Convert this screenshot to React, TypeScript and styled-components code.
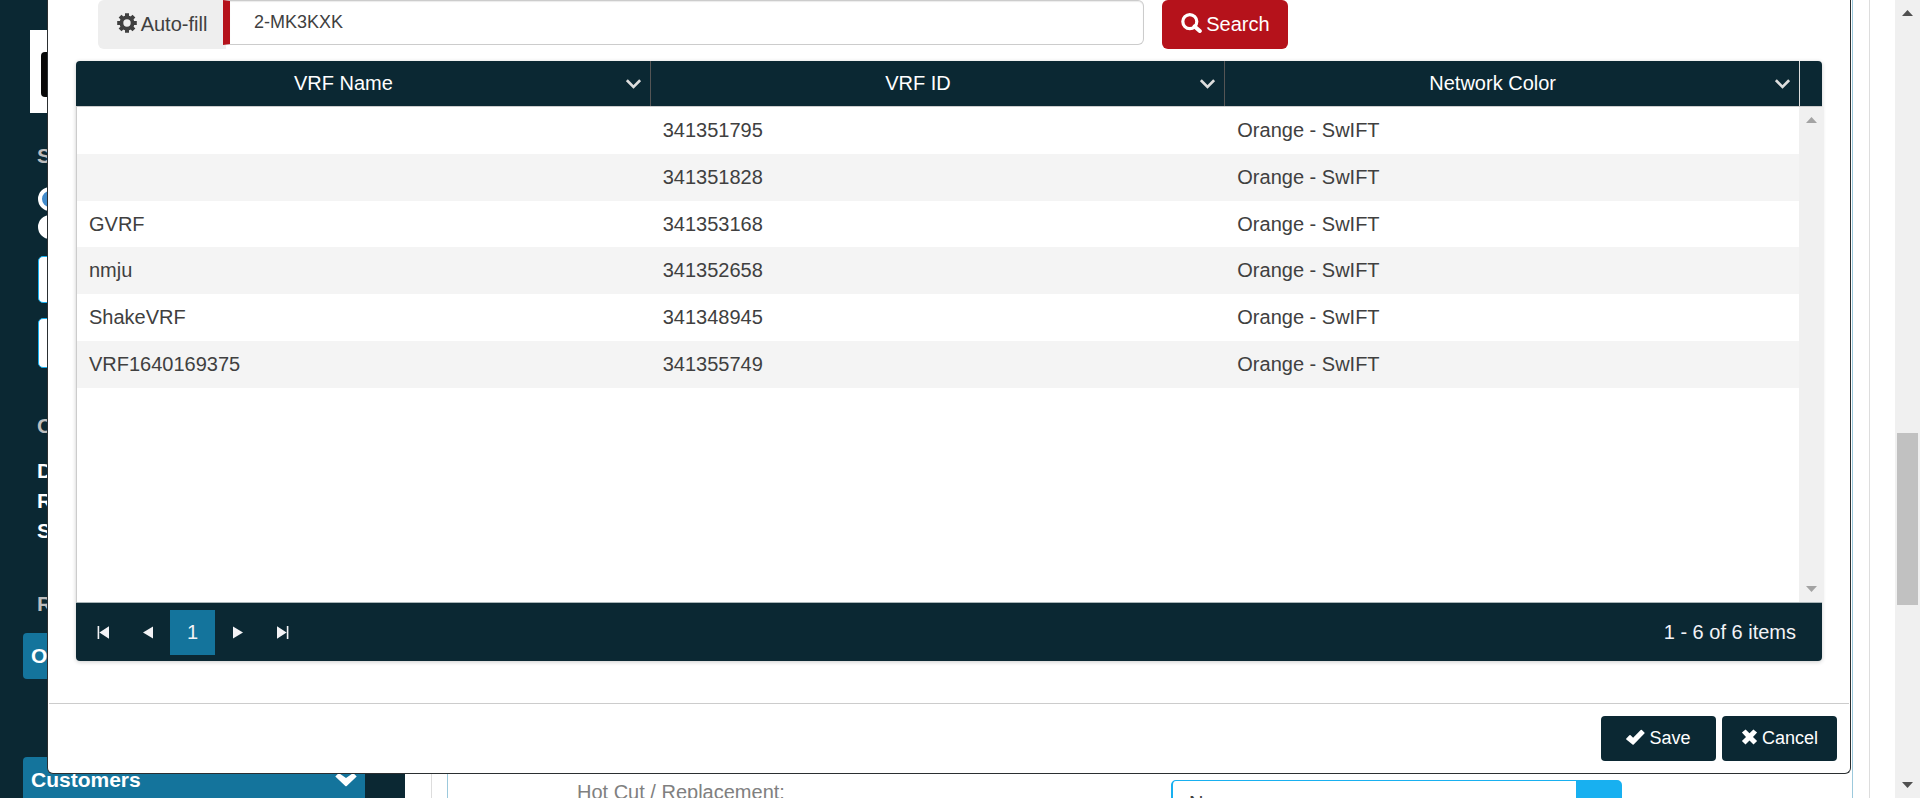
import React from "react";
import styled, { createGlobalStyle } from "styled-components";

const navy = "#0b2833";
const teal = "#14749c";
const red = "#b5121b";
const sky = "#18b0f0";

const GlobalStyle = createGlobalStyle`
  *, *::before, *::after { box-sizing: border-box; }
  body { margin: 0; background: #fff; }
  body, button, input, select { font-family: "Liberation Sans", Arial, sans-serif; }
  button { cursor: pointer; }
`;

const Page = styled.div`
  position: relative;
  display: flex;
  height: 100vh;
  overflow: hidden;
  font-size: 20px;
  color: #404040;
`;

/* Sidebar behind the dialog */
const Sidebar = styled.aside`
  display: flex;
  flex-direction: column;
  flex: 0 0 405px;
  padding: 30px 40px 0 23px;
  background: ${navy};
  color: #fff;
  font-size: 21px;
  font-weight: bold;
  line-height: 30px;
`;

const Logo = styled.div`
  flex: none;
  height: 83px;
  margin-left: 7px;
  padding: 22px 11px 16px;
  background: #fff;
`;

const LogoMark = styled.div`
  width: 45px;
  height: 45px;
  border-radius: 4px;
  background: #080808;
`;

const SideHeading = styled.h4<{ $gap: number }>`
  margin: ${(p) => p.$gap}px 14px 0;
  font-size: 21px;
  line-height: 30px;
  color: #bdbdbd;
`;

const RadioGroup = styled.div`
  display: flex;
  flex-direction: column;
  gap: 4px;
  margin: 16px 15px 0;
`;

const Radio = styled.input`
  appearance: none;
  width: 24px;
  height: 24px;
  margin: 0;
  border: 4px solid #fff;
  border-radius: 50%;
  background: #fff;
  &:checked { background: #428bca; }
`;

const SideInput = styled.input`
  flex: none;
  height: 47px;
  margin: 17px 15px 0;
  border: 1px solid ${sky};
  border-radius: 5px;
  background: #fff;
`;

const SideSelect = styled.select`
  flex: none;
  height: 50px;
  margin: 15px 15px 0;
  border: 1px solid ${sky};
  border-radius: 5px;
  background: #fff;
`;

const SideLinks = styled.nav`
  display: flex;
  flex-direction: column;
  margin: 15px 14px 0;
  a { color: #fff; text-decoration: none; }
`;

const SideButton = styled.button<{ $gap: number }>`
  display: flex;
  flex: none;
  align-items: center;
  justify-content: space-between;
  height: 46px;
  margin-top: ${(p) => p.$gap}px;
  padding: 0 8px;
  border: 0;
  border-radius: 4px;
  background: ${teal};
  color: #fff;
  font-size: 21px;
  font-weight: bold;
`;

/* Page form behind the dialog */
const Main = styled.main`
  display: flex;
  flex: 1;
  min-width: 0;
  padding: 0 25px 0 26px;
`;

const OuterPanel = styled.section`
  display: flex;
  flex: 1;
  padding: 0 16px 0 15px;
  border: solid #ddd;
  border-width: 0 1px;
`;

const InnerPanel = styled.div`
  flex: 1;
  padding: 780px 230px 0 129px;
  border: solid #9cc9dc;
  border-width: 0 1px;
`;

const FieldRow = styled.div`
  display: flex;
  justify-content: space-between;
  color: #808080;
  line-height: 24px;
`;

const FieldSelect = styled.select`
  appearance: none;
  width: 451px;
  height: 45px;
  padding: 0 16px;
  border: solid ${sky};
  border-width: 1px 46px 1px 2px;
  border-radius: 5px;
  background: #fff;
  color: #404040;
  font-size: 20px;
`;

/* Scroll bars */
const Track = styled.div<{ $padding: string }>`
  display: flex;
  flex: 1;
  flex-direction: column;
  align-items: center;
  justify-content: space-between;
  padding: ${(p) => p.$padding};
  background: #f0f0f0;
`;

const PageScroll = styled.div`
  display: flex;
  flex: 0 0 25px;
`;

const Thumb = styled.div`
  width: 21px;
  height: 172px;
  margin-top: 240px;
  background: #c1c1c1;
`;

/* Dialog */
const Dialog = styled.div`
  position: absolute;
  top: 0;
  left: 47px;
  right: 69px;
  border: 1px solid #2b2f31;
  border-top: 0;
  border-radius: 0 0 6px 6px;
  background: #fff;
`;

const DialogBody = styled.div`
  padding: 0 28px 42px;
`;

const SearchRow = styled.form`
  display: flex;
  gap: 18px;
  align-items: flex-start;
  margin-bottom: 12px;
  padding-left: 22px;
`;

const InputGroup = styled.div`
  display: flex;
  align-items: flex-start;
  width: 60.7%;
`;

const Button = styled.button<{ $tone: string; $size: "large" | "medium" }>`
  display: flex;
  align-items: center;
  justify-content: center;
  gap: 4px;
  flex: none;
  width: ${(p) => (p.$size === "large" ? 126 : 115)}px;
  height: ${(p) => (p.$size === "large" ? 49 : 45)}px;
  padding: 0;
  border: 0;
  border-radius: ${(p) => (p.$size === "large" ? 6 : 4)}px;
  background: ${(p) => p.$tone};
  color: #fff;
  font-size: ${(p) => (p.$size === "large" ? 20 : 18)}px;
  svg { margin-bottom: 3px; }
`;

const AutoFill = styled(Button)`
  width: 128px;
  border-radius: 6px 0 0 6px;
  color: #404040;
`;

const AccountInput = styled.input`
  flex: 1;
  min-width: 0;
  height: 45px;
  margin-left: -3px;
  padding: 0 24px;
  border: 1px solid #ccc;
  border-left: 7px solid ${red};
  border-radius: 0 6px 6px 0;
  box-shadow: inset 0 1px 1px #ececec;
  color: #404040;
  font-size: 18px;
`;

const Grid = styled.section`
  border-radius: 4px;
  box-shadow: 0 1px 4px rgba(0, 0, 0, 0.2);
`;

const GridMain = styled.div`
  display: flex;
`;

const GridContent = styled.div`
  flex: 1;
  min-width: 0;
  min-height: 541px;
`;

const Table = styled.table`
  width: 100%;
  height: 327px;
  table-layout: fixed;
  border-collapse: separate;
  border-spacing: 0;
`;

const HeadCell = styled.th<{ $last?: boolean }>`
  height: 46px;
  padding: 0;
  border-bottom: 1px solid #ccc;
  background: ${navy};
  color: #fff;
  font-weight: normal;
  &:first-child { border-top-left-radius: 4px; }
  > div {
    display: flex;
    align-items: center;
    height: 45px;
    border-right: 1px solid ${(p) => (p.$last ? "#ddd" : "#555")};
  }
`;

const HeadTitle = styled.span`
  flex: 1;
  text-align: center;
`;

const MenuButton = styled.button`
  display: flex;
  width: 39px;
  padding: 0 0 0 15px;
  border: 0;
  background: none;
  color: #ddd;
`;

const Row = styled.tr`
  &:nth-child(even) { background: #f4f4f4; }
`;

const Cell = styled.td`
  padding: 0 12px;
  &:first-child { border-left: 1px solid #ccc; }
`;

const BlankArea = styled.div`
  height: 214px;
  border-left: 1px solid #ccc;
`;

const GridScroll = styled.div`
  display: flex;
  flex: 0 0 22px;
  flex-direction: column;
`;

const HeadCap = styled.div`
  height: 46px;
  border-bottom: 1px solid #ccc;
  border-top-right-radius: 4px;
  background: ${navy};
`;

const GridTrack = styled(Track)`
  margin-left: -1px;
  margin-right: -2px;
`;

const Pager = styled.footer`
  display: flex;
  align-items: center;
  height: 59px;
  padding: 0 26px 0 4px;
  border-top: 1px solid #a9b5b8;
  border-radius: 0 0 4px 4px;
  background: ${navy};
  color: #f3f3f6;
`;

const PagerButton = styled.button<{ $current?: boolean }>`
  display: flex;
  align-items: center;
  justify-content: center;
  width: 45px;
  height: 45px;
  padding: 0;
  border: 0;
  background: ${(p) => (p.$current ? teal : "none")};
  color: #f3f3f6;
  font-size: 20px;
`;

const PagerInfo = styled.span`
  margin-left: auto;
`;

const DialogFooter = styled.footer`
  display: flex;
  justify-content: flex-end;
  gap: 6px;
  margin: 0 1px;
  padding: 12px;
  border-top: 1px solid #ccc;
`;

/* Icons */
const Gear = () => (
  <svg width="20" height="20" viewBox="0 0 20 20" fill="none" stroke="currentColor" aria-hidden="true">
    <circle cx="10" cy="10" r="5.6" strokeWidth="3.8" />
    {[0, 45, 90, 135].map((a) => (
      <g key={a} transform={`rotate(${a} 10 10)`} strokeWidth="4">
        <path d="M10 0.2V3.6M10 16.4V19.8" />
      </g>
    ))}
  </svg>
);

const Magnifier = () => (
  <svg width="21" height="20" viewBox="0 0 21 20" fill="none" stroke="currentColor" aria-hidden="true">
    <circle cx="8.8" cy="8.6" r="7" strokeWidth="3.2" />
    <path d="M13.6 13.4L18.8 18" strokeWidth="4" strokeLinecap="round" />
  </svg>
);

const Tick = () => (
  <svg width="19" height="18" viewBox="0 0 19 18" aria-hidden="true">
    <path fill="currentColor" d="M0.3 10.4L3.4 7.3Q4 6.8 4.6 7.3L7.1 9.7L14.7 2Q15.3 1.5 15.9 2L18.4 4.4Q18.9 5 18.4 5.6L7.7 16.4Q7.1 16.9 6.5 16.4L0.3 11.4Q-0.1 10.9 0.3 10.4Z" />
  </svg>
);

const Cross = () => (
  <svg width="17" height="18" viewBox="0 0 17 18" aria-hidden="true">
    <path fill="currentColor" d="M4.6 1.4L8.5 5.3L12.4 1.4L16.1 4.6L12 8.9L16.1 12.9L12.5 16.4L8.5 12.4L4.5 16.4L0.9 12.9L5 8.9L0.9 4.6Z" />
  </svg>
);

const HeavyChevron = () => (
  <svg width="22" height="14" viewBox="0 0 22 14" aria-hidden="true">
    <path fill="currentColor" d="M0.3 3.4L3.8 0L11 5L18.2 0L21.7 3.4L11.7 13Q11 13.6 10.3 13Z" />
  </svg>
);

const ThinChevron = () => (
  <svg width="15" height="10" viewBox="0 0 15 10" fill="none" stroke="currentColor" strokeWidth="2.6" aria-hidden="true">
    <path d="M0.9 1.2L7.5 7.8L14.1 1.2" />
  </svg>
);

const Arrow = ({ down, color }: { down?: boolean; color: string }) => (
  <svg width="11" height="6" viewBox="0 0 11 6" fill={color} aria-hidden="true">
    <path d={down ? "M0 0H11L5.5 6Z" : "M0 6H11L5.5 0Z"} />
  </svg>
);

const PageArrow = ({ back, end }: { back?: boolean; end?: boolean }) => (
  <svg width="12" height="13" viewBox="0 0 12 13" fill="currentColor" aria-hidden="true">
    <g transform={back ? "translate(12 0) scale(-1 1)" : undefined}>
      <path d={end ? "M0 0.2L9.6 6.5L0 12.8ZM9.8 0H11.4V13H9.8Z" : "M1 0.4L11 6.5L1 12.6Z"} />
    </g>
  </svg>
);

const columns = ["VRF Name", "VRF ID", "Network Color"];

const records = [
  { name: "", id: "341351795" },
  { name: "", id: "341351828" },
  { name: "GVRF", id: "341353168" },
  { name: "nmju", id: "341352658" },
  { name: "ShakeVRF", id: "341348945" },
  { name: "VRF1640169375", id: "341355749" },
];

export default function App() {
  return (
    <Page>
      <GlobalStyle />
      <Sidebar>
        <Logo><LogoMark /></Logo>
        <SideHeading $gap={28}>S</SideHeading>
        <RadioGroup>
          <Radio type="radio" name="scope" aria-label="First scope" defaultChecked />
          <Radio type="radio" name="scope" aria-label="Second scope" />
        </RadioGroup>
        <SideInput type="text" aria-label="Search text" />
        <SideSelect aria-label="Search type" />
        <SideHeading $gap={43}>C</SideHeading>
        <SideLinks>
          <a href="#d">D</a>
          <a href="#r">R</a>
          <a href="#s">S</a>
        </SideLinks>
        <SideHeading $gap={43}>R</SideHeading>
        <SideButton type="button" $gap={14}>O</SideButton>
        <SideButton type="button" $gap={78}>Customers<HeavyChevron /></SideButton>
      </Sidebar>

      <Main>
        <OuterPanel>
          <InnerPanel>
            <FieldRow>
              <label htmlFor="hot-cut">Hot Cut / Replacement:</label>
              <FieldSelect id="hot-cut" defaultValue="No">
                <option>No</option>
              </FieldSelect>
            </FieldRow>
          </InnerPanel>
        </OuterPanel>
      </Main>

      <PageScroll>
        <Track $padding="10px 0">
          <Arrow color="#505050" />
          <Thumb />
          <Arrow down color="#505050" />
        </Track>
      </PageScroll>

      <Dialog role="dialog" aria-label="VRF search">
        <DialogBody>
          <SearchRow onSubmit={(e) => e.preventDefault()}>
            <InputGroup>
              <AutoFill type="button" $tone="#eee" $size="large"><Gear />Auto-fill</AutoFill>
              <AccountInput type="text" aria-label="Account" defaultValue="2-MK3KXK" />
            </InputGroup>
            <Button type="submit" $tone={red} $size="large"><Magnifier />Search</Button>
          </SearchRow>

          <Grid>
            <GridMain>
              <GridContent>
                <Table>
                  <thead>
                    <tr>
                      {columns.map((title, i) => (
                        <HeadCell key={title} $last={i === columns.length - 1}>
                          <div>
                            <HeadTitle>{title}</HeadTitle>
                            <MenuButton type="button" aria-label={`${title} menu`}><ThinChevron /></MenuButton>
                          </div>
                        </HeadCell>
                      ))}
                    </tr>
                  </thead>
                  <tbody>
                    {records.map((r) => (
                      <Row key={r.id}>
                        <Cell>{r.name}</Cell>
                        <Cell>{r.id}</Cell>
                        <Cell>Orange - SwIFT</Cell>
                      </Row>
                    ))}
                  </tbody>
                </Table>
                <BlankArea />
              </GridContent>
              <GridScroll>
                <HeadCap />
                <GridTrack $padding="10px 0">
                  <Arrow color="#a3a3a3" />
                  <Arrow down color="#a3a3a3" />
                </GridTrack>
              </GridScroll>
            </GridMain>
            <Pager>
              <PagerButton type="button" aria-label="First page"><PageArrow back end /></PagerButton>
              <PagerButton type="button" aria-label="Previous page"><PageArrow back /></PagerButton>
              <PagerButton type="button" $current>1</PagerButton>
              <PagerButton type="button" aria-label="Next page"><PageArrow /></PagerButton>
              <PagerButton type="button" aria-label="Last page"><PageArrow end /></PagerButton>
              <PagerInfo>1 - 6 of 6 items</PagerInfo>
            </Pager>
          </Grid>
        </DialogBody>
        <DialogFooter>
          <Button type="button" $tone={navy} $size="medium"><Tick />Save</Button>
          <Button type="button" $tone={navy} $size="medium"><Cross />Cancel</Button>
        </DialogFooter>
      </Dialog>
    </Page>
  );
}
